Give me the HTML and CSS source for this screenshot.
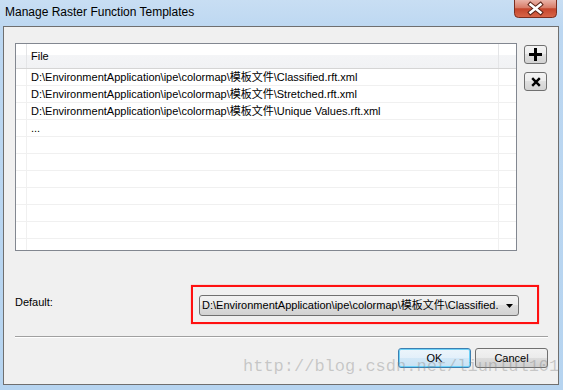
FILE: index.html
```html
<!DOCTYPE html>
<html>
<head>
<meta charset="utf-8">
<link rel="stylesheet" href="styles.css">
</head>
<body>
<div class="window">
  <div class="titlebar">
    <span class="title">Manage Raster Function Templates</span>
    <div class="close">
      <svg width="43" height="18" viewBox="0 0 43 18">
        <defs>
          <linearGradient id="cg" x1="0" y1="0" x2="0" y2="1">
            <stop offset="0" stop-color="#eab3a8"/>
            <stop offset="0.45" stop-color="#d77b67"/>
            <stop offset="0.5" stop-color="#c4452c"/>
            <stop offset="1" stop-color="#d9674a"/>
          </linearGradient>
        </defs>
        <path d="M0.5 0 V13.5 Q0.5 17.5 4.5 17.5 H38.5 Q42.5 17.5 42.5 13.5 V0" fill="url(#cg)" stroke="#7a2e20"/>
        <path d="M16.5 4.5 L26.5 12.5 M26.5 4.5 L16.5 12.5" stroke="#5b2418" stroke-width="4.6" stroke-linecap="square"/>
        <path d="M16.5 4.5 L26.5 12.5 M26.5 4.5 L16.5 12.5" stroke="#ffffff" stroke-width="2.6" stroke-linecap="square"/>
      </svg>
    </div>
  </div>
  <div class="client">
    <div class="top">
      <div class="list">
        <div class="row head"><div class="c0"></div><div class="c1">File</div><div class="c2"></div></div>
        <div class="row"><div class="c0"></div><div class="c1">D:\EnvironmentApplication\ipe\colormap\模板文件\Classified.rft.xml</div><div class="c2"></div></div>
        <div class="row"><div class="c0"></div><div class="c1">D:\EnvironmentApplication\ipe\colormap\模板文件\Stretched.rft.xml</div><div class="c2"></div></div>
        <div class="row"><div class="c0"></div><div class="c1">D:\EnvironmentApplication\ipe\colormap\模板文件\Unique Values.rft.xml</div><div class="c2"></div></div>
        <div class="row"><div class="c0"></div><div class="c1">...</div><div class="c2"></div></div>
        <div class="row"><div class="c0"></div><div class="c1"></div><div class="c2"></div></div>
        <div class="row"><div class="c0"></div><div class="c1"></div><div class="c2"></div></div>
        <div class="row"><div class="c0"></div><div class="c1"></div><div class="c2"></div></div>
        <div class="row"><div class="c0"></div><div class="c1"></div><div class="c2"></div></div>
        <div class="row"><div class="c0"></div><div class="c1"></div><div class="c2"></div></div>
        <div class="row"><div class="c0"></div><div class="c1"></div><div class="c2"></div></div>
        <div class="row"><div class="c0"></div><div class="c1"></div><div class="c2"></div></div>
      </div>
      <div class="side">
        <div class="tool">
          <svg width="13" height="13" viewBox="0 0 13 13"><path d="M5 0 H8 V5 H13 V8 H8 V13 H5 V8 H0 V5 H5 Z" fill="#000"/></svg>
        </div>
        <div class="tool">
          <svg width="10" height="10" viewBox="0 0 10 10"><path d="M1.2 1.2 L8.8 8.8 M8.8 1.2 L1.2 8.8" stroke="#000" stroke-width="2.4"/></svg>
        </div>
      </div>
    </div>
    <div class="default">
      <span class="label">Default:</span>
      <div class="mark">
        <div class="combo">
          <span class="combo-text">D:\EnvironmentApplication\ipe\colormap\模板文件\Classified.</span>
          <svg width="7" height="4" viewBox="0 0 7 4"><path d="M0 0 H7 L3.5 4 Z" fill="#000"/></svg>
        </div>
      </div>
    </div>
    <div class="sep"></div>
    <div class="buttons">
      <div class="btn ok">OK</div>
      <div class="btn">Cancel</div>
    </div>
    <div class="watermark">http://blog.csdn.net/liunlul101</div>
  </div>
</div>
</body>
</html>
```
FILE: styles.css
```css
html, body {
  margin: 0;
  padding: 0;
}
body {
  width: 563px;
  height: 390px;
  overflow: hidden;
  font-family: "Liberation Sans", Arial, "Noto Sans CJK SC", sans-serif;
  font-size: 11px;
  color: #000;
}
.window {
  height: 390px;
  display: flex;
  flex-direction: column;
  background: linear-gradient(#c8def3 0, #bcd7f1 30px, #b6d4f0 100%);
}
.titlebar {
  height: 26px;
  flex: none;
  display: flex;
  justify-content: space-between;
  align-items: flex-start;
  padding: 0 6px 0 5px;
  box-sizing: border-box;
}
.title {
  margin-top: 5px;
  font-size: 12px;
  line-height: 15px;
}
.close {
  width: 43px;
  height: 18px;
  margin-top: 0;
}
.close svg {
  display: block;
}
.client {
  position: relative;
  height: 359px;
  margin: 0 4px 5px 3px;
  box-sizing: border-box;
  border: 1px solid #6f6f6f;
  background: #f0f0f0;
  padding: 16px 10px 0 11px;
  display: flex;
  flex-direction: column;
}
.top {
  display: flex;
  align-items: flex-start;
  gap: 7px;
}
.list {
  width: 502px;
  height: 208px;
  box-sizing: border-box;
  border: 1px solid #828790;
  background: #fff;
  overflow: hidden;
}
.row {
  display: grid;
  grid-template-columns: 11px 472px 1fr;
  height: 17px;
  box-sizing: border-box;
  border-bottom: 1px solid #f0f0f0;
}
.row .c0, .row .c1 {
  border-right: 1px solid #f0f0f0;
}
.c1 {
  padding-left: 4px;
  line-height: 16px;
  white-space: nowrap;
  overflow: hidden;
}
.row.head {
  height: 25px;
  background: linear-gradient(#ffffff 0, #ffffff 45%, #f4f5f7 45%, #f1f2f4 100%);
  border-bottom: 1px solid #d5d5d5;
}
.row.head .c0, .row.head .c1 {
  border-right: 1px solid #e4e5e7;
}
.row.head .c1 {
  line-height: 24px;
}
.side {
  display: flex;
  flex-direction: column;
  gap: 8px;
  margin-top: 2px;
}
.tool {
  width: 23px;
  height: 19px;
  box-sizing: border-box;
  border: 1px solid #707070;
  border-radius: 3px;
  background: linear-gradient(#f4f4f4 0, #ececec 50%, #dfdfdf 50%, #d2d2d2 100%);
  display: flex;
  align-items: center;
  justify-content: center;
}
.default {
  display: flex;
  align-items: flex-start;
  margin-top: 34px;
}
.label {
  width: 176px;
  flex: none;
  margin-top: 10px;
  line-height: 15px;
}
.mark {
  border: 2px solid #ff1010;
  padding: 8px 18px 6px 6px;
  box-shadow: 0 0 1px rgba(255, 0, 0, 0.5);
}
.combo {
  width: 320px;
  height: 21px;
  box-sizing: border-box;
  border: 1px solid #707070;
  border-radius: 3px;
  background: linear-gradient(#f2f2f2 0, #ebebeb 50%, #dddddd 50%, #d2d2d2 100%);
  display: flex;
  align-items: center;
  justify-content: space-between;
  padding: 0 5px 0 2px;
}
.combo-text {
  white-space: nowrap;
  line-height: 15px;
}
.combo svg {
  display: block;
}
.sep {
  margin-top: 12px;
  height: 1px;
  background: #a0a0a0;
  border-bottom: 1px solid #ffffff;
}
.buttons {
  display: flex;
  justify-content: flex-end;
  gap: 4px;
  margin-top: 10px;
}
.btn {
  width: 73px;
  height: 20px;
  box-sizing: border-box;
  border: 1px solid #707070;
  border-radius: 3px;
  background: linear-gradient(#f2f2f2 0, #ebebeb 50%, #dddddd 50%, #cfcfcf 100%);
  display: flex;
  align-items: center;
  justify-content: center;
  line-height: 15px;
}
.btn.ok {
  border-color: #3c7fb1;
  background: linear-gradient(#ecf5fb 0, #e3f0fa 50%, #d3e8f7 50%, #c9e2f4 100%);
  box-shadow: inset 0 0 0 1px #6ed2f8;
}
.watermark {
  position: absolute;
  left: 239px;
  top: 331px;
  font-family: "Liberation Mono", "Courier New", monospace;
  font-size: 17px;
  line-height: 17px;
  color: rgba(130, 130, 130, 0.38);
  white-space: nowrap;
  pointer-events: none;
}
```
